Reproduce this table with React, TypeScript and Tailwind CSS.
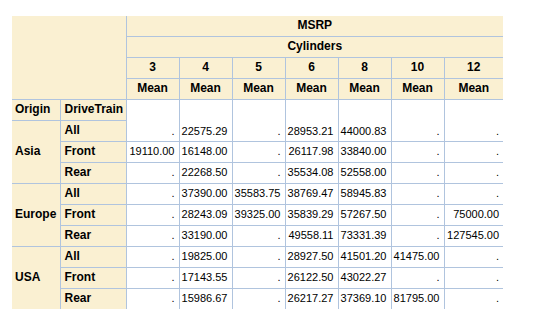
const CYL = ['3', '4', '5', '6', '8', '10', '12']

const GROUPS: { origin: string; rows: { drive: string; values: string[] }[] }[] = [
  {
    origin: 'Asia',
    rows: [
      { drive: 'All', values: ['.', '22575.29', '.', '28953.21', '44000.83', '.', '.'] },
      { drive: 'Front', values: ['19110.00', '16148.00', '.', '26117.98', '33840.00', '.', '.'] },
      { drive: 'Rear', values: ['.', '22268.50', '.', '35534.08', '52558.00', '.', '.'] },
    ],
  },
  {
    origin: 'Europe',
    rows: [
      { drive: 'All', values: ['.', '37390.00', '35583.75', '38769.47', '58945.83', '.', '.'] },
      { drive: 'Front', values: ['.', '28243.09', '39325.00', '35839.29', '57267.50', '.', '75000.00'] },
      { drive: 'Rear', values: ['.', '33190.00', '.', '49558.11', '73331.39', '.', '127545.00'] },
    ],
  },
  {
    origin: 'USA',
    rows: [
      { drive: 'All', values: ['.', '19825.00', '.', '28927.50', '41501.20', '41475.00', '.'] },
      { drive: 'Front', values: ['.', '17143.55', '.', '26122.50', '43022.27', '.', '.'] },
      { drive: 'Rear', values: ['.', '15986.67', '.', '26217.27', '37369.10', '81795.00', '.'] },
    ],
  },
]

const cell = 'border border-[#b0c4de] p-0'
const head = `${cell} bg-[#faf0d2] text-center text-[12px] font-bold`
const rowHead = `${cell} bg-[#faf0d2] text-left text-[12px] font-bold`
const data = `${cell} bg-white text-right pr-[4px] text-[11px] align-middle`

export default function App() {
  return (
    <div className="h-[326px] w-[534px] bg-white pl-[12px] pt-[16px] font-['Liberation_Sans',Arial,sans-serif] text-black">
      <table className="w-[491px] table-fixed border-collapse border-hidden leading-[13px]">
        <colgroup>
          <col className="w-[48px]" />
          <col className="w-[66px]" />
          {CYL.map((c, i) => (
            <col key={c} className={i === 6 ? 'w-[59px]' : 'w-[53px]'} />
          ))}
        </colgroup>
        <tbody>
          <tr className="h-[20px]">
            <td rowSpan={4} colSpan={2} className={`${cell} bg-[#faf0d2]`} />
            <th colSpan={7} className={head}>MSRP</th>
          </tr>
          <tr className="h-[21px]">
            <th colSpan={7} className={head}>Cylinders</th>
          </tr>
          <tr className="h-[21px]">
            {CYL.map((c) => (
              <th key={c} className={head}>{c}</th>
            ))}
          </tr>
          <tr className="h-[21px]">
            {CYL.map((c) => (
              <th key={c} className={head}>Mean</th>
            ))}
          </tr>
          <tr className="h-[21px]">
            <th className={`${rowHead} pl-[3px]`}>Origin</th>
            <th className={`${rowHead} pl-[4px]`}>DriveTrain</th>
            {GROUPS[0].rows[0].values.map((v, i) => (
              <td key={i} rowSpan={2} className={`${data} !align-bottom pb-[3px]`}>{v}</td>
            ))}
          </tr>
          {GROUPS.map((g) =>
            g.rows.map((r, ri) => (
              <tr key={g.origin + r.drive} className="h-[21px]">
                {ri === 0 && (
                  <th rowSpan={3} className={`${rowHead} pl-[3px]`}>{g.origin}</th>
                )}
                <th className={`${rowHead} pl-[4px]`}>{r.drive}</th>
                {!(g.origin === 'Asia' && ri === 0) &&
                  r.values.map((v, i) => (
                    <td key={i} className={data}>{v}</td>
                  ))}
              </tr>
            )),
          )}
        </tbody>
      </table>
    </div>
  )
}
